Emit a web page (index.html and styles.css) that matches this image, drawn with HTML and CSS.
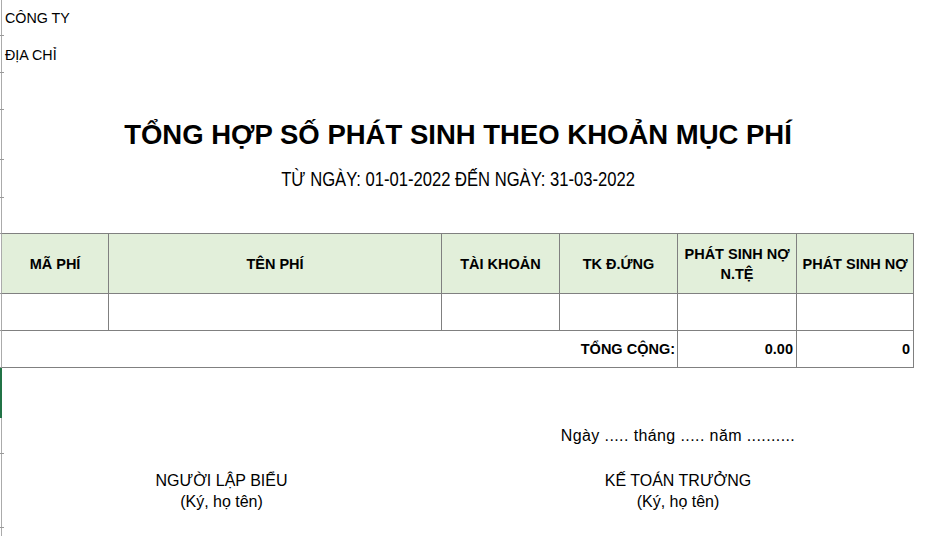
FILE: index.html
```html
<!DOCTYPE html>
<html lang="vi">
<head>
<meta charset="utf-8">
<title>Tổng hợp số phát sinh theo khoản mục phí</title>
<link rel="stylesheet" href="styles.css">
</head>
<body>
<div class="page">
  <div class="gutter">
    <div class="g g35"></div>
    <div class="g g36"></div>
    <div class="g g36"></div>
    <div class="g g49"></div>
    <div class="g g37"></div>
    <div class="g g35"></div>
    <div class="g g59"></div>
    <div class="g g36"></div>
    <div class="g g36"></div>
    <div class="g g49 sel"></div>
    <div class="g g35"></div>
    <div class="g g73"></div>
    <div class="g g-rest"></div>
  </div>
  <div class="content">
    <div class="row r-company">CÔNG TY</div>
    <div class="row r-address">ĐỊA CHỈ</div>
    <div class="row r-blank37"></div>
    <div class="row r-title">TỔNG HỢP SỐ PHÁT SINH THEO KHOẢN MỤC PHÍ</div>
    <div class="row r-sub"><span class="narrow">TỪ NGÀY: 01-01-2022 ĐẾN NGÀY: 31-03-2022</span></div>
    <div class="row r-blank35"></div>

    <div class="table">
      <div class="cell head">MÃ PHÍ</div>
      <div class="cell head">TÊN PHÍ</div>
      <div class="cell head">TÀI KHOẢN</div>
      <div class="cell head">TK Đ.ỨNG</div>
      <div class="cell head">PHÁT SINH NỢ<br>N.TỆ</div>
      <div class="cell head">PHÁT SINH NỢ</div>

      <div class="cell"></div>
      <div class="cell"></div>
      <div class="cell"></div>
      <div class="cell"></div>
      <div class="cell"></div>
      <div class="cell"></div>

      <div class="cell total-label">TỔNG CỘNG:</div>
      <div class="cell num">0.00</div>
      <div class="cell num">0</div>
    </div>

    <div class="row r-blank50"></div>
    <div class="sign-grid">
      <div class="date-line">Ngày ..... tháng ..... năm ..........</div>
      <div class="sign left">NGƯỜI LẬP BIỂU<br>(Ký, họ tên)</div>
      <div class="sign right">KẾ TOÁN TRƯỞNG<br>(Ký, họ tên)</div>
    </div>
  </div>
</div>
</body>
</html>
```

FILE: styles.css
```css
html, body {
  margin: 0;
  padding: 0;
  background: #ffffff;
}

body {
  font-family: "Liberation Sans", Arial, sans-serif;
  font-size: 14.3px;
  color: #000000;
  width: 927px;
  height: 536px;
  overflow: hidden;
}

.page {
  display: flex;
  align-items: flex-start;
  height: 536px;
}

/* row-header edge on the left */
.gutter {
  width: 2px;
  flex: 0 0 2px;
  height: 536px;
  display: flex;
  flex-direction: column;
  background: linear-gradient(to right, transparent 1px, #ababab 1px);
}

.g {
  width: 4px;
  border-bottom: 1px solid #9a9a9a;
  flex: 0 0 auto;
}

.g35 { height: 35px; }
.g36 { height: 36px; }
.g37 { height: 37px; }
.g49 { height: 49px; }
.g59 { height: 59px; }
.g73 { height: 73px; }
.g-rest { flex: 1 1 auto; border-bottom: none; }

.g.sel {
  width: 2px;
  background: #217346;
  border-bottom-color: #217346;
}

.content {
  width: 912px;
  display: flex;
  flex-direction: column;
}

.row {
  display: flex;
  align-items: center;
}

.r-company { height: 36px; padding-left: 3px; }
.r-address { height: 37px; padding-left: 3px; }
.r-blank37 { height: 37px; }
.r-blank35 { height: 35px; }
.r-blank50 { height: 50px; }

.r-title {
  height: 50px;
  justify-content: center;
  font-weight: bold;
  font-size: 27.5px;
}

.r-sub {
  height: 38px;
  justify-content: center;
  font-size: 20px;
}

/* condensed face (Arial Narrow look) */
.narrow {
  display: inline-block;
  white-space: nowrap;
  transform: scaleX(0.83);
}

/* table drawn as grid: gaps are the grey rules */
.table {
  display: grid;
  grid-template-columns: 106px 332px 117px 117px 118px 116px;
  grid-template-rows: 59px 36px 36px;
  gap: 1px;
  padding: 1px 1px 1px 0;
  background: #808080;
  width: 911px;
  box-sizing: content-box;
}

.cell {
  background: #ffffff;
  display: flex;
  align-items: center;
  justify-content: center;
  text-align: center;
}

.cell.head {
  background: #e2efda;
  font-weight: bold;
  font-size: 14.5px;
  line-height: 20px;
}

.total-label {
  grid-column: 1 / 5;
  justify-content: flex-end;
  padding-right: 2px;
  font-weight: bold;
  font-size: 14.5px;
}

.num {
  justify-content: flex-end;
  padding-right: 3px;
  font-weight: bold;
  font-size: 14.5px;
}

.sign-grid {
  display: grid;
  grid-template-columns: 106px 332px 117px 117px 118px 116px;
  grid-template-rows: 36px 74px;
  column-gap: 1px;
  font-size: 16px;
}

.date-line {
  grid-column: 4 / 6;
  grid-row: 1;
  display: flex;
  align-items: center;
  justify-content: center;
  white-space: nowrap;
  letter-spacing: 0.4px;
}

.sign {
  grid-row: 2;
  display: flex;
  align-items: center;
  justify-content: center;
  text-align: center;
  line-height: 21px;
}

.sign.left { grid-column: 1 / 3; }
.sign.right { grid-column: 4 / 6; }
```
